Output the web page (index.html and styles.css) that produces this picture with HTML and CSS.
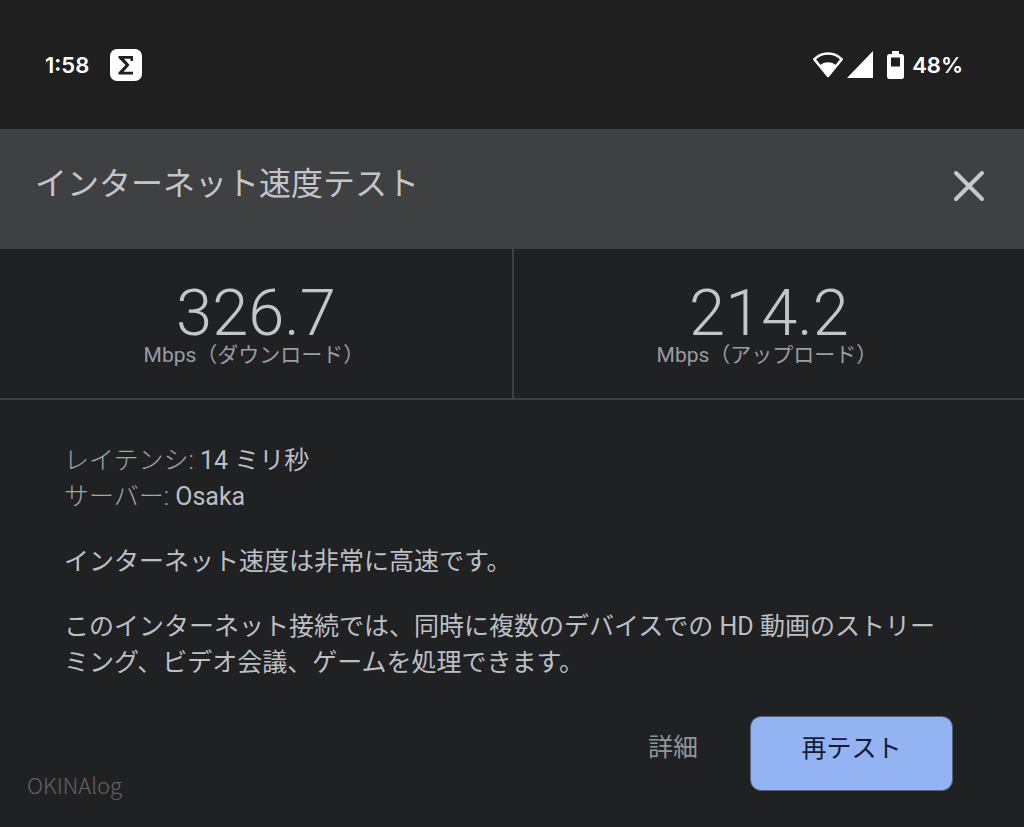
FILE: index.html
```html
<!DOCTYPE html>
<html lang="ja">
<head>
  <meta charset="UTF-8">
  <meta name="viewport" content="width=device-width, initial-scale=1.0">
  <title>インターネット速度テスト</title>
  <link rel="stylesheet" href="styles.css">
</head>
<body>

  <!-- Phone status bar -->
  <header class="status-bar">
    <div class="status-left">
      <span>1:58</span>
      <svg class="app-icon" width="32" height="32" viewBox="0 0 32 32" aria-hidden="true">
        <rect width="32" height="32" rx="7" fill="#fff"/>
        <path d="M8.500 7h14.500v5h-2.500V9.800H14L19.500 16 13.500 22.700H23V25.500H8.500V23.500L15.500 16 8.500 9z" fill="#1f1f1f"/>
      </svg>
    </div>
    <div class="status-right">
      <svg class="wifi" width="32" height="28" viewBox="0 0 32 28" aria-hidden="true">
        <path d="M2.300 8.300C10 .500 22 .500 29.700 8.300L16 25z" fill="none" stroke="#fff" stroke-width="2.600" stroke-linejoin="round"/>
        <path d="M7.500 14.500c5-4.500 12-4.500 17 0L16 25z" fill="#fff"/>
      </svg>
      <svg class="signal" width="26" height="28" viewBox="0 0 26 28" aria-hidden="true">
        <path d="M26 0v27H0z" fill="#fff"/>
      </svg>
      <svg class="battery" width="17" height="28" viewBox="0 0 17 28" aria-hidden="true">
        <path d="M5 0h7v3h2.500A2.500 2.500 0 0 1 17 5.500v20a2.500 2.500 0 0 1-2.500 2.500h-12A2.500 2.500 0 0 1 0 25.500v-20A2.500 2.500 0 0 1 2.500 3H5zM4 6.500v9h9v-9z" fill="#fff" fill-rule="evenodd"/>
      </svg>
      <span>48%</span>
    </div>
  </header>

  <main>
    <div class="title-bar">
      <h1>インターネット速度テスト</h1>
      <button class="close" type="button" aria-label="閉じる">
        <svg width="32" height="32" viewBox="0 0 32 32" aria-hidden="true">
          <path d="M3 3l26 26M29 3L3 29" stroke="#c5c8cd" stroke-width="4" stroke-linecap="round"/>
        </svg>
      </button>
    </div>

    <!-- Speeds -->
    <div class="results">
      <div class="result">
        <div class="speed">326.7</div>
        <div class="unit">Mbps（ダウンロード）</div>
      </div>
      <div class="result">
        <div class="speed">214.2</div>
        <div class="unit">Mbps（アップロード）</div>
      </div>
    </div>

    <div class="details">
      <p><span class="label">レイテンシ:</span> 14 ミリ秒<br>
      <span class="label">サーバー:</span> Osaka</p>
      <p>インターネット速度は非常に高速です。</p>
      <p>このインターネット接続では、同時に複数のデバイスでの HD 動画のストリーミング、ビデオ会議、ゲームを処理できます。</p>
    </div>

    <div class="actions">
      <button class="more" type="button">詳細</button>
      <button class="retest" type="button">再テスト</button>
    </div>
  </main>

  <footer class="credit">OKINAlog</footer>

</body>
</html>
```
FILE: styles.css
```css
* {
  box-sizing: border-box;
}

body {
  margin: 0;
  background-color: #202123;
  color: #bdbfc3;
  font-family: Roboto, "Noto Sans CJK JP", sans-serif;
  font-size: 25px;
  line-height: 36px;
}

/* Status bar */
.status-bar {
  display: flex;
  justify-content: space-between;
  align-items: center;
  height: 129px;
  padding: 1px 61px 0 45px;
  background-color: #1f1f1f;
  color: #fff;
  font-family: Inter, sans-serif;
  font-size: 22px;
  font-weight: 600;
}

.status-left,
.status-right {
  display: flex;
  align-items: center;
}

.status-left {
  gap: 21px;
}

.signal {
  margin: 0 14px 0 3px;
}

.battery {
  margin-right: 8px;
}

/* Title */
.title-bar {
  display: flex;
  justify-content: space-between;
  align-items: center;
  height: 120px;
  padding: 0 39px 6px 35px;
  background-color: #3f4042;
}

h1 {
  margin: 0;
  padding-bottom: 4px;
  color: #c3c5ca;
  font-size: 32px;
  font-weight: 400;
}

button {
  padding: 0;
  border: 0;
  background: none;
  font: inherit;
  cursor: pointer;
}

.close {
  display: flex;
}

/* Speeds */
.results {
  display: grid;
  grid-template-columns: 1fr 1fr;
  height: 151px;
  border-bottom: 2px solid #3f4042;
}

.result {
  padding-top: 38px;
  text-align: center;
}

.result + .result {
  border-left: 2px solid #3f4042;
}

.speed {
  color: #c4c5c7;
  font-size: 65px;
  font-weight: 300;
  line-height: 52px;
}

.unit {
  padding-right: 4px;
  color: #9a9ca2;
  font-size: 21px;
  line-height: 32px;
}

/* Text */
.details {
  padding: 43px 71px 0 64px;
}

p {
  margin: 0 0 29px;
}

.label {
  color: #a4a6aa;
  font-weight: 300;
}

/* Buttons */
.actions {
  display: flex;
  justify-content: flex-end;
  gap: 52px;
  padding: 6px 71px 0;
}

.more {
  height: 64px;
  color: #94969a;
}

.retest {
  width: 203px;
  height: 75px;
  padding-bottom: 10px;
  border: 1px solid #55607a;
  border-radius: 11px;
  background-color: #94b3f3;
  color: #131c33;
}

.credit {
  margin-top: -25px;
  padding-left: 27px;
  color: #626367;
  font-family: "Noto Sans CJK JP", sans-serif;
  font-size: 22px;
  font-weight: 300;
}
```
